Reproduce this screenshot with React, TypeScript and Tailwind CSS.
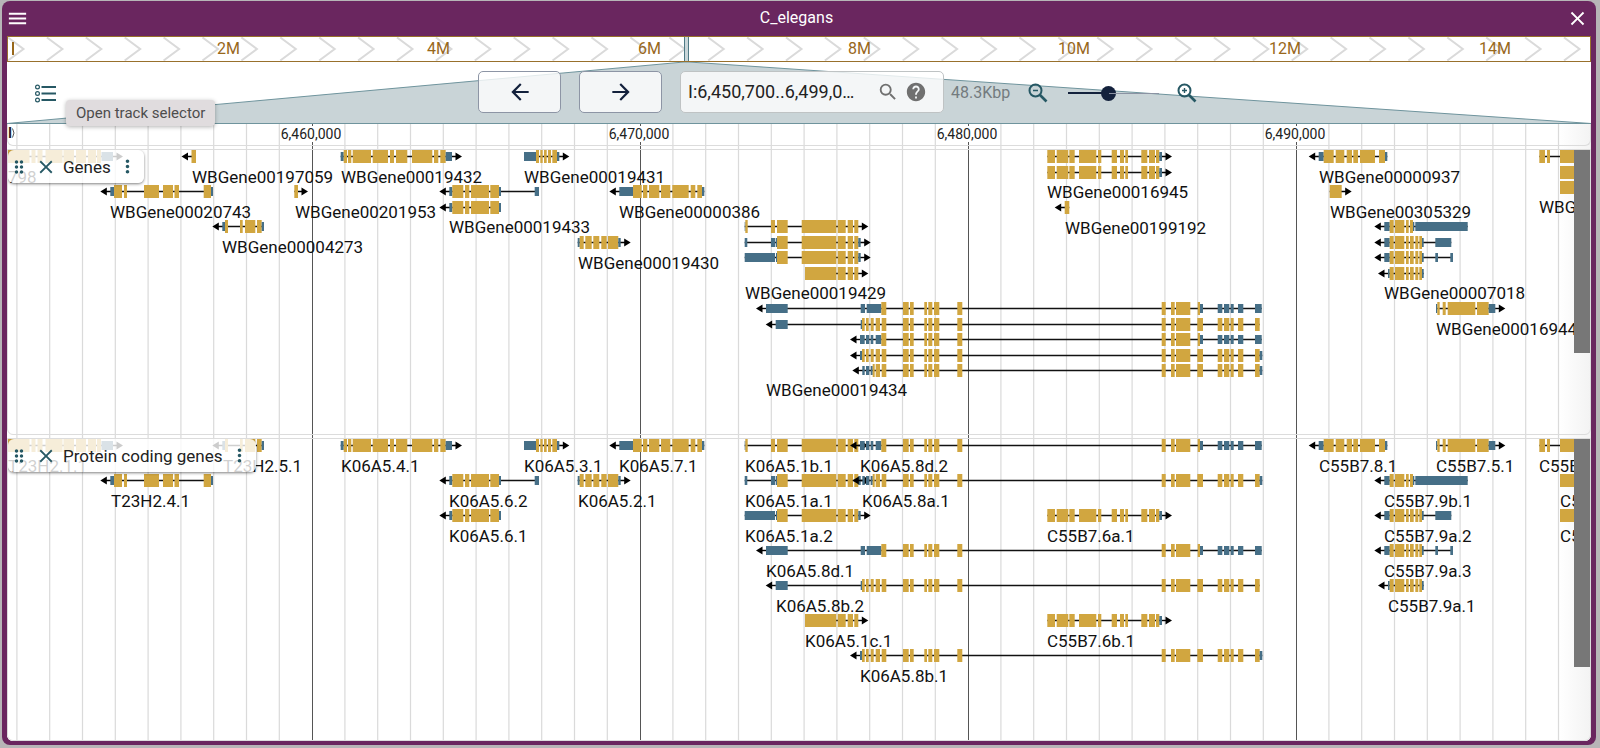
import React from "react";
import {
  MdArrowBack,
  MdArrowForward,
  MdClose,
  MdDragIndicator,
  MdHelp,
  MdMenu,
  MdMoreVert,
  MdSearch,
} from "react-icons/md";

/** [start, end, kind]: "c" is coding sequence, "u" is untranslated region. */
type Exon = [number, number, "c" | "u"];
type Strand = "+" | "-";
type Isoform = Exon[];
interface Gene {
  label: string;
  top: number;
  strand: Strand | "";
  isoforms: Isoform[];
  labelX?: number;
}

const CODING = "#d1a640";
const UTR = "#466f87";
const ORIGIN = 7;
const FIRST_MAJOR = 312;
const MAJOR_STEP = 328;

const c = (...pairs: [number, number][]): Exon[] => pairs.map(([a, b]) => [a, b, "c"]);
const u = (...pairs: [number, number][]): Exon[] => pairs.map(([a, b]) => [a, b, "u"]);

/* Transcript models */
const t23h21: Isoform = [
  ...c([7, 29.5], [31.5, 35.5], [37.5, 42.5], [45.5, 62.5], [63.5, 74], [76, 86], [88, 96], [97, 101]),
  ...u([101.5, 113]),
];
const t23h24: Isoform = [
  ...u([110.3, 114]),
  ...c([114, 122], [124, 127], [144, 159], [163, 173], [174.5, 179], [203.7, 211]),
  ...u([211, 213]),
];
const t23h25: Isoform = [
  ...u([222.3, 225]),
  ...c([225, 228], [240, 242.7], [245, 255.3], [257, 261.7]),
  ...u([261.7, 264]),
];
const k54: Isoform = [
  ...u([340.7, 343.7]),
  ...c([343.7, 347], [348, 351.3], [352.7, 371], [372.7, 388], [390, 394], [396, 407.3], [412, 432.3], [434, 438.3], [440.3, 445.7]),
  ...u([445.7, 452]),
];
const k53: Isoform = [
  ...u([524, 536]),
  ...c([536, 539], [540.3, 542.7], [544, 546.7], [548, 551], [552.3, 557]),
  ...u([557, 559.3]),
];
const k561: Isoform = [
  ...u([449.3, 452.3]),
  ...c([452.3, 463.3], [465, 469.3], [471, 489], [490.3, 499]),
  ...u([499, 501]),
];
const k562: Isoform = [...k561, ...u([534.7, 539])];
const k57: Isoform = [
  ...u([619.3, 633]),
  ...c([633, 641.7], [643, 647.3], [649, 659.3], [661, 670.3], [672.3, 688.7], [690.7, 695.3], [697.3, 702]),
  ...u([702, 704.3]),
];
const k52: Isoform = [
  ...u([577.7, 579.7]),
  ...c([579.7, 583.7], [585.3, 591.7], [593.3, 599.3], [601.3, 606.7], [608, 618.3]),
  ...u([618.3, 620.7]),
];
const k51tail = c([837.7, 845.7], [847.7, 853], [854.3, 858.3]);
const k51b: Isoform = [
  ...u([744.7, 745.5]),
  ...c([745.3, 747.7], [771, 775], [777, 787.7], [801.7, 836.3]),
  ...k51tail,
];
const k51a1: Isoform = [
  ...u([744.7, 747.3], [771, 775.3], [776, 777]),
  ...c([777, 787.7], [801.7, 836.3]),
  ...k51tail,
  ...u([858.3, 860.7]),
];
const k51a2: Isoform = [
  ...u([744.7, 775], [776, 777]),
  ...c([777, 787.7], [801.7, 836.3]),
  ...k51tail,
  ...u([858.3, 860.7]),
];
const k51c: Isoform = [...c([805, 836.3]), ...k51tail];

const k58middle = c(
  [903, 908.7], [910, 913.7], [924.3, 927], [928.3, 932.3], [934, 939.3], [957.3, 962.3],
  [1161.7, 1165.7], [1171, 1174.7], [1176, 1190.3],
);
const k58utrEnd: Exon[] = [
  ...k58middle,
  ...c([1197.7, 1200]),
  ...u([1200, 1203], [1217.7, 1222.3], [1224, 1229.3], [1230.7, 1233.7], [1238, 1243.3], [1255, 1261.7]),
];
const k58codingEnd: Exon[] = [
  ...k58middle,
  ...c([1197.3, 1203], [1217.7, 1222.3], [1224, 1229.3], [1230.7, 1233.7], [1238, 1243.3], [1255, 1259.7]),
];
const k58start = c([862, 864.7], [866, 868.7], [870.7, 873.7], [875.7, 880], [881.7, 886.3]);
const k58d1: Isoform = [...u([766, 787.7], [860.7, 865], [866.7, 881.3]), ...c([881.3, 886.3]), ...k58utrEnd];
const k58b2: Isoform = [...u([775.7, 787.7], [860.7, 862]), ...k58start, ...k58codingEnd];
const k58d2: Isoform = [
  ...u([860, 864.7], [866, 869.3], [870.7, 873.3], [875.7, 881.3]),
  ...c([881.3, 886.3]),
  ...k58utrEnd,
];
const k58b1: Isoform = [...u([860, 862]), ...k58start, ...k58codingEnd, ...u([1259.7, 1262.3])];
const k58a1: Isoform = [
  ...u([862.3, 864.7], [866, 869.3], [870.7, 872.7]),
  ...c([872.7, 874.7], [875.7, 880], [881.7, 886.3]),
  ...k58codingEnd,
  ...u([1259.7, 1262.3]),
];

const c76: Isoform = [
  ...c(
    [1047.3, 1055], [1056.7, 1068.3], [1069.3, 1074.7], [1079, 1096.3], [1098, 1101.3], [1111.7, 1117],
    [1120, 1124], [1125.3, 1128], [1141.3, 1147.3], [1149, 1155], [1156, 1159.3],
  ),
  ...u([1159.3, 1162]),
];
const c78: Isoform = [
  ...u([1318.7, 1323.7]),
  ...c([1323.7, 1333.7], [1335.7, 1344.3], [1346.7, 1352], [1353.3, 1358], [1360, 1375], [1379, 1385]),
  ...u([1385, 1387.3]),
];
const c79body: Exon[] = [
  ...c([1389.7, 1393.7], [1395, 1404.3], [1406, 1408.7], [1410, 1413.7], [1415.3, 1418.3], [1419.3, 1422]),
  ...u([1422, 1423.7]),
];
const c79b1: Isoform = [
  ...u([1384.3, 1389.7]),
  ...c([1389.7, 1393.7], [1395, 1404.3], [1406, 1408.7], [1410, 1413]),
  ...u([1413, 1414.3], [1415.3, 1467.7]),
];
const c79a2: Isoform = [...u([1384.3, 1389.7]), ...c79body, ...u([1435.3, 1451.3])];
const c79a3: Isoform = [...u([1384.3, 1389.7]), ...c79body, ...u([1435.3, 1438], [1450.3, 1453])];
const c79a1: Isoform = [...u([1388, 1389.7]), ...c79body];
const c75: Isoform = [
  ...u([1436, 1437.3]),
  ...c([1437.3, 1439.7], [1442.7, 1445.7], [1447.7, 1475.3], [1477, 1488.7]),
  ...u([1488.7, 1495.3]),
];
const edgeA: Isoform = c([1539.3, 1545], [1547, 1550], [1560, 1600]);
const edgeB: Isoform = c([1560, 1600]);

const geneTrack: Gene[] = [
  { label: "798", top: 0, strand: "+", isoforms: [t23h21], labelX: 8 },
  { label: "WBGene00197059", top: 0, strand: "-", isoforms: [c([191.5, 196])] },
  { label: "WBGene00019432", top: 0, strand: "+", isoforms: [k54] },
  { label: "WBGene00019431", top: 0, strand: "+", isoforms: [k53] },
  { label: "WBGene00020743", top: 35, strand: "-", isoforms: [t23h24] },
  { label: "WBGene00201953", top: 35, strand: "+", isoforms: [c([294.3, 298])], labelX: 295 },
  { label: "WBGene00019433", top: 35, strand: "-", isoforms: [k562, k561] },
  { label: "WBGene00000386", top: 35, strand: "-", isoforms: [k57] },
  { label: "WBGene00004273", top: 70, strand: "-", isoforms: [t23h25] },
  { label: "WBGene00019430", top: 86, strand: "+", isoforms: [k52] },
  { label: "WBGene00019429", top: 70, strand: "+", isoforms: [k51b, k51a1, k51a2, k51c] },
  { label: "WBGene00019434", top: 152, strand: "-", isoforms: [k58d1, k58b2, k58d2, k58b1, k58a1] },
  { label: "WBGene00016945", top: 0, strand: "+", isoforms: [c76, c76] },
  { label: "WBGene00199192", top: 51, strand: "-", isoforms: [c([1064.7, 1069.3])] },
  { label: "WBGene00000937", top: 0, strand: "-", isoforms: [c78] },
  { label: "WBGene00305329", top: 35, strand: "+", isoforms: [c([1329.7, 1341.7])] },
  { label: "WBGene00007018", top: 70, strand: "-", isoforms: [c79b1, c79a2, c79a3, c79a1] },
  { label: "WBGene00016944", top: 152, strand: "+", isoforms: [c75] },
  { label: "WBGene00016943", top: 0, strand: "", isoforms: [edgeA, edgeB, edgeB] },
];

const codingTrack: Gene[] = [
  { label: "T23H2.1.1", top: 0, strand: "+", isoforms: [t23h21], labelX: 8 },
  { label: "T23H2.5.1", top: 0, strand: "-", isoforms: [t23h25], labelX: 223 },
  { label: "K06A5.4.1", top: 0, strand: "+", isoforms: [k54] },
  { label: "K06A5.3.1", top: 0, strand: "+", isoforms: [k53] },
  { label: "K06A5.7.1", top: 0, strand: "-", isoforms: [k57] },
  { label: "K06A5.1b.1", top: 0, strand: "+", isoforms: [k51b] },
  { label: "K06A5.8d.2", top: 0, strand: "-", isoforms: [k58d2] },
  { label: "C55B7.8.1", top: 0, strand: "-", isoforms: [c78] },
  { label: "C55B7.5.1", top: 0, strand: "+", isoforms: [c75] },
  { label: "C55B7.4.1", top: 0, strand: "", isoforms: [edgeA] },
  { label: "T23H2.4.1", top: 35, strand: "-", isoforms: [t23h24], labelX: 111 },
  { label: "K06A5.6.2", top: 35, strand: "-", isoforms: [k562] },
  { label: "K06A5.2.1", top: 35, strand: "+", isoforms: [k52] },
  { label: "K06A5.1a.1", top: 35, strand: "+", isoforms: [k51a1] },
  { label: "K06A5.8a.1", top: 35, strand: "-", isoforms: [k58a1] },
  { label: "C55B7.9b.1", top: 35, strand: "-", isoforms: [c79b1] },
  { label: "C55B7.4.2", top: 35, strand: "", isoforms: [edgeB] },
  { label: "K06A5.6.1", top: 70, strand: "-", isoforms: [k561] },
  { label: "K06A5.1a.2", top: 70, strand: "+", isoforms: [k51a2] },
  { label: "C55B7.6a.1", top: 70, strand: "+", isoforms: [c76] },
  { label: "C55B7.9a.2", top: 70, strand: "-", isoforms: [c79a2] },
  { label: "C55B7.4.3", top: 70, strand: "", isoforms: [edgeB] },
  { label: "K06A5.8d.1", top: 105, strand: "-", isoforms: [k58d1] },
  { label: "C55B7.9a.3", top: 105, strand: "-", isoforms: [c79a3] },
  { label: "K06A5.8b.2", top: 140, strand: "-", isoforms: [k58b2] },
  { label: "C55B7.9a.1", top: 140, strand: "-", isoforms: [c79a1] },
  { label: "K06A5.1c.1", top: 175, strand: "+", isoforms: [k51c] },
  { label: "C55B7.6b.1", top: 175, strand: "+", isoforms: [c76] },
  { label: "K06A5.8b.1", top: 210, strand: "-", isoforms: [k58b1] },
];

function Transcript({ exons, top, strand }: { exons: Isoform; top: number; strand: Gene["strand"] }) {
  const start = exons[0][0];
  const end = exons[exons.length - 1][1];
  const mid = top + 6.5;
  return (
    <g>
      <path d={`M${start} ${mid}H${end}`} stroke="#111" strokeWidth="1.400" />
      {exons.map(([a, b, kind], i) =>
        kind === "c" ? (
          <rect key={i} x={a} y={top} width={b - a} height={13} fill={CODING} />
        ) : (
          <rect key={i} x={a} y={top + 2} width={b - a} height={9} fill={UTR} />
        ),
      )}
      {strand === "-" && (
        <>
          <path d={`M${start - 5} ${mid}H${start}`} stroke="#000" strokeWidth="1.400" />
          <path d={`M${start - 10} ${mid}l6.500 -4v8z`} fill="#000" />
        </>
      )}
      {strand === "+" && (
        <>
          <path d={`M${end} ${mid}H${end + 5}`} stroke="#000" strokeWidth="1.400" />
          <path d={`M${end + 10} ${mid}l-6.500 -4v8z`} fill="#000" />
        </>
      )}
    </g>
  );
}

function GeneGlyph({ gene }: { gene: Gene }) {
  const offsets = gene.isoforms.map((_, i) => Math.round(i * 15.6));
  const last = offsets[offsets.length - 1];
  const baseline = gene.top + (last > 0 ? last + 32 : 33);
  return (
    <g>
      {gene.isoforms.map((exons, i) => (
        <Transcript key={i} exons={exons} top={gene.top + offsets[i]} strand={gene.strand} />
      ))}
      <text x={gene.labelX ?? Math.round(gene.isoforms[0][0][0])} y={baseline} fontSize={17} fill="#111">
        {gene.label}
      </text>
    </g>
  );
}

function Track({
  name,
  genes,
  className,
  scrollClass,
}: {
  name: string;
  genes: Gene[];
  className: string;
  scrollClass: string;
}) {
  return (
    <section aria-label={name} className={`relative overflow-hidden rounded-b-md border border-[#dcdcdc] ${className}`}>
      <svg className="absolute inset-0 h-full w-full">
        <g transform={`translate(${-ORIGIN - 1} 0)`}>
          {genes.map((g) => (
            <GeneGlyph key={g.label} gene={g} />
          ))}
        </g>
      </svg>
      <div className={`absolute top-0 right-0 w-4 bg-[#777] ${scrollClass}`} />
      <div className="absolute top-0 left-0 flex h-[33px] items-center rounded-md bg-white/80 pr-1.5 pl-px text-[#265864] shadow-[0_1px_3px_rgba(0,0,0,0.5)]">
        <button aria-label={`Drag ${name}`} className="mr-1.5">
          <MdDragIndicator size={20} />
        </button>
        <button aria-label={`Close ${name}`} className="mr-1.5">
          <MdClose size={22} />
        </button>
        <span className="mr-1.5 text-[17px] leading-5 text-[#222]">{name}</span>
        <button aria-label={`${name} menu`}>
          <MdMoreVert size={21} />
        </button>
      </div>
    </section>
  );
}

function GridLines() {
  const minor = Array.from({ length: 90 }, (_, i) => i - 9).filter((i) => i % 10 !== 0);
  const major = Array.from({ length: 9 }, (_, i) => i);
  return (
    <svg className="absolute inset-0 h-full w-full" aria-hidden="true">
      <g transform={`translate(${-ORIGIN} 0)`}>
        {minor.map((i) => (
          <rect key={i} x={FIRST_MAJOR + (i * MAJOR_STEP) / 10 - 0.5} y="0" width="1.200" height="100%" fill="#dadada" />
        ))}
        {major.map((i) => (
          <rect key={i} x={FIRST_MAJOR + i * MAJOR_STEP} y="0" width="1" height="100%" fill="#555" />
        ))}
      </g>
    </svg>
  );
}

function ScaleBar() {
  return (
    <div className="relative h-[22px] overflow-hidden rounded-b-md border border-t-0 border-[#dcdcdc]">
      <svg className="absolute inset-0 h-full w-full">
        <g transform={`translate(${-ORIGIN - 1} 0)`} fontSize={14} fill="#222">
          {["6,460,000", "6,470,000", "6,480,000", "6,490,000"].map((t, i) => (
            <React.Fragment key={t}>
              <rect x={280 + i * MAJOR_STEP} y="2" width="63" height="16" fill="#fff" />
              <text x={FIRST_MAJOR - 1 + i * MAJOR_STEP} y="15" textAnchor="middle">
                {t}
              </text>
            </React.Fragment>
          ))}
          <text x="8" y="14" fontWeight={700}>
            I
          </text>
          <path d="M12.500 4.500q3 4.500 0 9" fill="none" stroke="#555" />
        </g>
      </svg>
    </div>
  );
}

function Overview() {
  const chevrons = Array.from({ length: 60 }, (_, i) => 8 + i * 38.9);
  return (
    <div className="relative h-[26px] overflow-hidden border border-[#98702c] bg-white">
      <svg className="absolute inset-0 h-full w-full">
        <g transform={`translate(${-ORIGIN - 1} -1)`}>
          {chevrons.map((x) => (
            <path key={x} d={`M${x} 1.500L${x + 15.5} 13L${x} 24.500`} fill="none" stroke="#dadada" strokeWidth="2" />
          ))}
          <rect x="12" y="6" width="2" height="13" fill="#98681b" />
          {["2M", "4M", "6M", "8M", "10M", "12M", "14M"].map((t, i) => (
            <text key={t} x={Math.round(217 + i * 210.3)} y="18" fontSize={16} fill="#98681b">
              {t}
            </text>
          ))}
          <rect x="684.5" y="0.500" width="4" height="26" fill="#c9d6d9" stroke="#4f7a85" />
        </g>
      </svg>
    </div>
  );
}

function Magnifier({ plus }: { plus?: boolean }) {
  return (
    <svg width="20" height="20" viewBox="0 0 20 20" fill="none" stroke="#265864">
      <circle cx="7.500" cy="7.500" r="6" strokeWidth="2" />
      <path d="M12 12l6.500 6.500" strokeWidth="2.600" />
      <path d={plus ? "M5 7.500h5M7.500 5v5" : "M5 7.500h5"} strokeWidth="1.400" />
    </svg>
  );
}

function NavControls() {
  return (
    <div className="relative flex h-[62px] items-center">
      <svg
        className="absolute inset-0 h-full w-full"
        viewBox="0 0 1584 62"
        preserveAspectRatio="none"
        aria-hidden="true"
      >
        <path
          d="M0 61.500L677 0H682L1584 61.500z"
          fill="#c9d4d7"
          stroke="#6f949d"
          vectorEffect="non-scaling-stroke"
        />
      </svg>
      <button aria-label="Open track selector" className="relative mt-0.5 ml-7">
        <svg width="22" height="20" viewBox="0 0 22 20" fill="none" stroke="#265864">
          {[3, 9.5, 16].map((y) => (
            <React.Fragment key={y}>
              <circle cx="2.500" cy={y} r="1.900" strokeWidth="1.200" />
              <path d={`M6.500 ${y}h14.500`} strokeWidth="2.200" />
            </React.Fragment>
          ))}
        </svg>
      </button>
      <div
        role="tooltip"
        className="absolute top-[38px] left-[59px] z-10 rounded-sm bg-[#e0dcde] px-2.5 text-[15px] leading-[26px] text-[#4d4d4d] shadow-[0_1px_4px_rgba(0,0,0,0.3)]"
      >
        Open track selector
      </div>
      <div className="relative ml-[421px] flex shrink-0 items-center pb-0.5">
        <button
          aria-label="Pan left"
          className="flex h-[42px] w-[83px] items-center justify-center rounded-[5px] border border-[#8d95a5] bg-white/80 text-[#13213c]"
        >
          <MdArrowBack size={26} />
        </button>
        <button
          aria-label="Pan right"
          className="ml-[18px] flex h-[42px] w-[83px] items-center justify-center rounded-[5px] border border-[#8d95a5] bg-white/80 text-[#13213c]"
        >
          <MdArrowForward size={26} />
        </button>
        <div className="ml-[18px] flex h-[42px] w-[264px] items-center rounded-[5px] border border-[#bfc3c4] bg-white/80 pl-[7px] text-[#707070]">
          <input
            aria-label="Location"
            defaultValue="I:6,450,700..6,499,000"
            className="w-[171px] bg-transparent text-lg leading-6 text-ellipsis text-[#222] outline-none"
          />
          <button aria-label="Search" className="ml-[18px]">
            <MdSearch size={22} />
          </button>
          <button aria-label="Help" className="ml-1.5">
            <MdHelp size={22} />
          </button>
        </div>
        <span className="mt-0.5 ml-[7px] w-[60px] text-base leading-5 text-[#737b7e]">48.3Kbp</span>
        <button aria-label="Zoom out" className="mt-0.5 ml-[17px]">
          <Magnifier />
        </button>
        <label className="relative mt-0.5 ml-5 flex h-4 w-[91px] items-center">
          <input
            type="range"
            aria-label="Zoom level"
            min={0}
            max={100}
            defaultValue={42}
            className="absolute inset-0 m-0 w-full opacity-0"
          />
          <span className="h-0.5 w-10 bg-[#13213c]" />
          <span className="-mx-[7px] h-[15px] w-[15px] shrink-0 rounded-full bg-[#13213c]" />
          <span className="h-px flex-1 bg-[#8b93a3]" />
        </label>
        <button aria-label="Zoom in" className="mt-0.5 ml-[18px]">
          <Magnifier plus />
        </button>
      </div>
    </div>
  );
}

export default function App() {
  return (
    <div className="flex min-h-screen flex-col bg-[#b7b5b7] pt-px pr-1 pb-[3px] pl-0.5 font-['Roboto',sans-serif]">
      <main className="flex flex-1 flex-col rounded-lg bg-[#6a265f] px-[5px] pb-1">
        <header className="-ml-px flex h-[35px] items-center justify-between pr-0.5 text-white">
          <button aria-label="Menu">
            <MdMenu size={23} />
          </button>
          <h1 className="pr-0.5 pb-0.5 text-base leading-5">C_elegans</h1>
          <button aria-label="Close">
            <MdClose size={23} />
          </button>
        </header>
        <div className="flex flex-1 flex-col overflow-hidden rounded-b-md bg-white">
          <Overview />
          <NavControls />
          <div className="relative flex flex-1 flex-col gap-[3px] bg-linear-to-l from-[#f3f3f3] to-white to-[32px]">
            <GridLines />
            <ScaleBar />
            <Track name="Genes" genes={geneTrack} className="h-[286px]" scrollClass="h-[203px]" />
            <Track name="Protein coding genes" genes={codingTrack} className="min-h-[260px] flex-1" scrollClass="h-[228px]" />
          </div>
        </div>
      </main>
    </div>
  );
}
